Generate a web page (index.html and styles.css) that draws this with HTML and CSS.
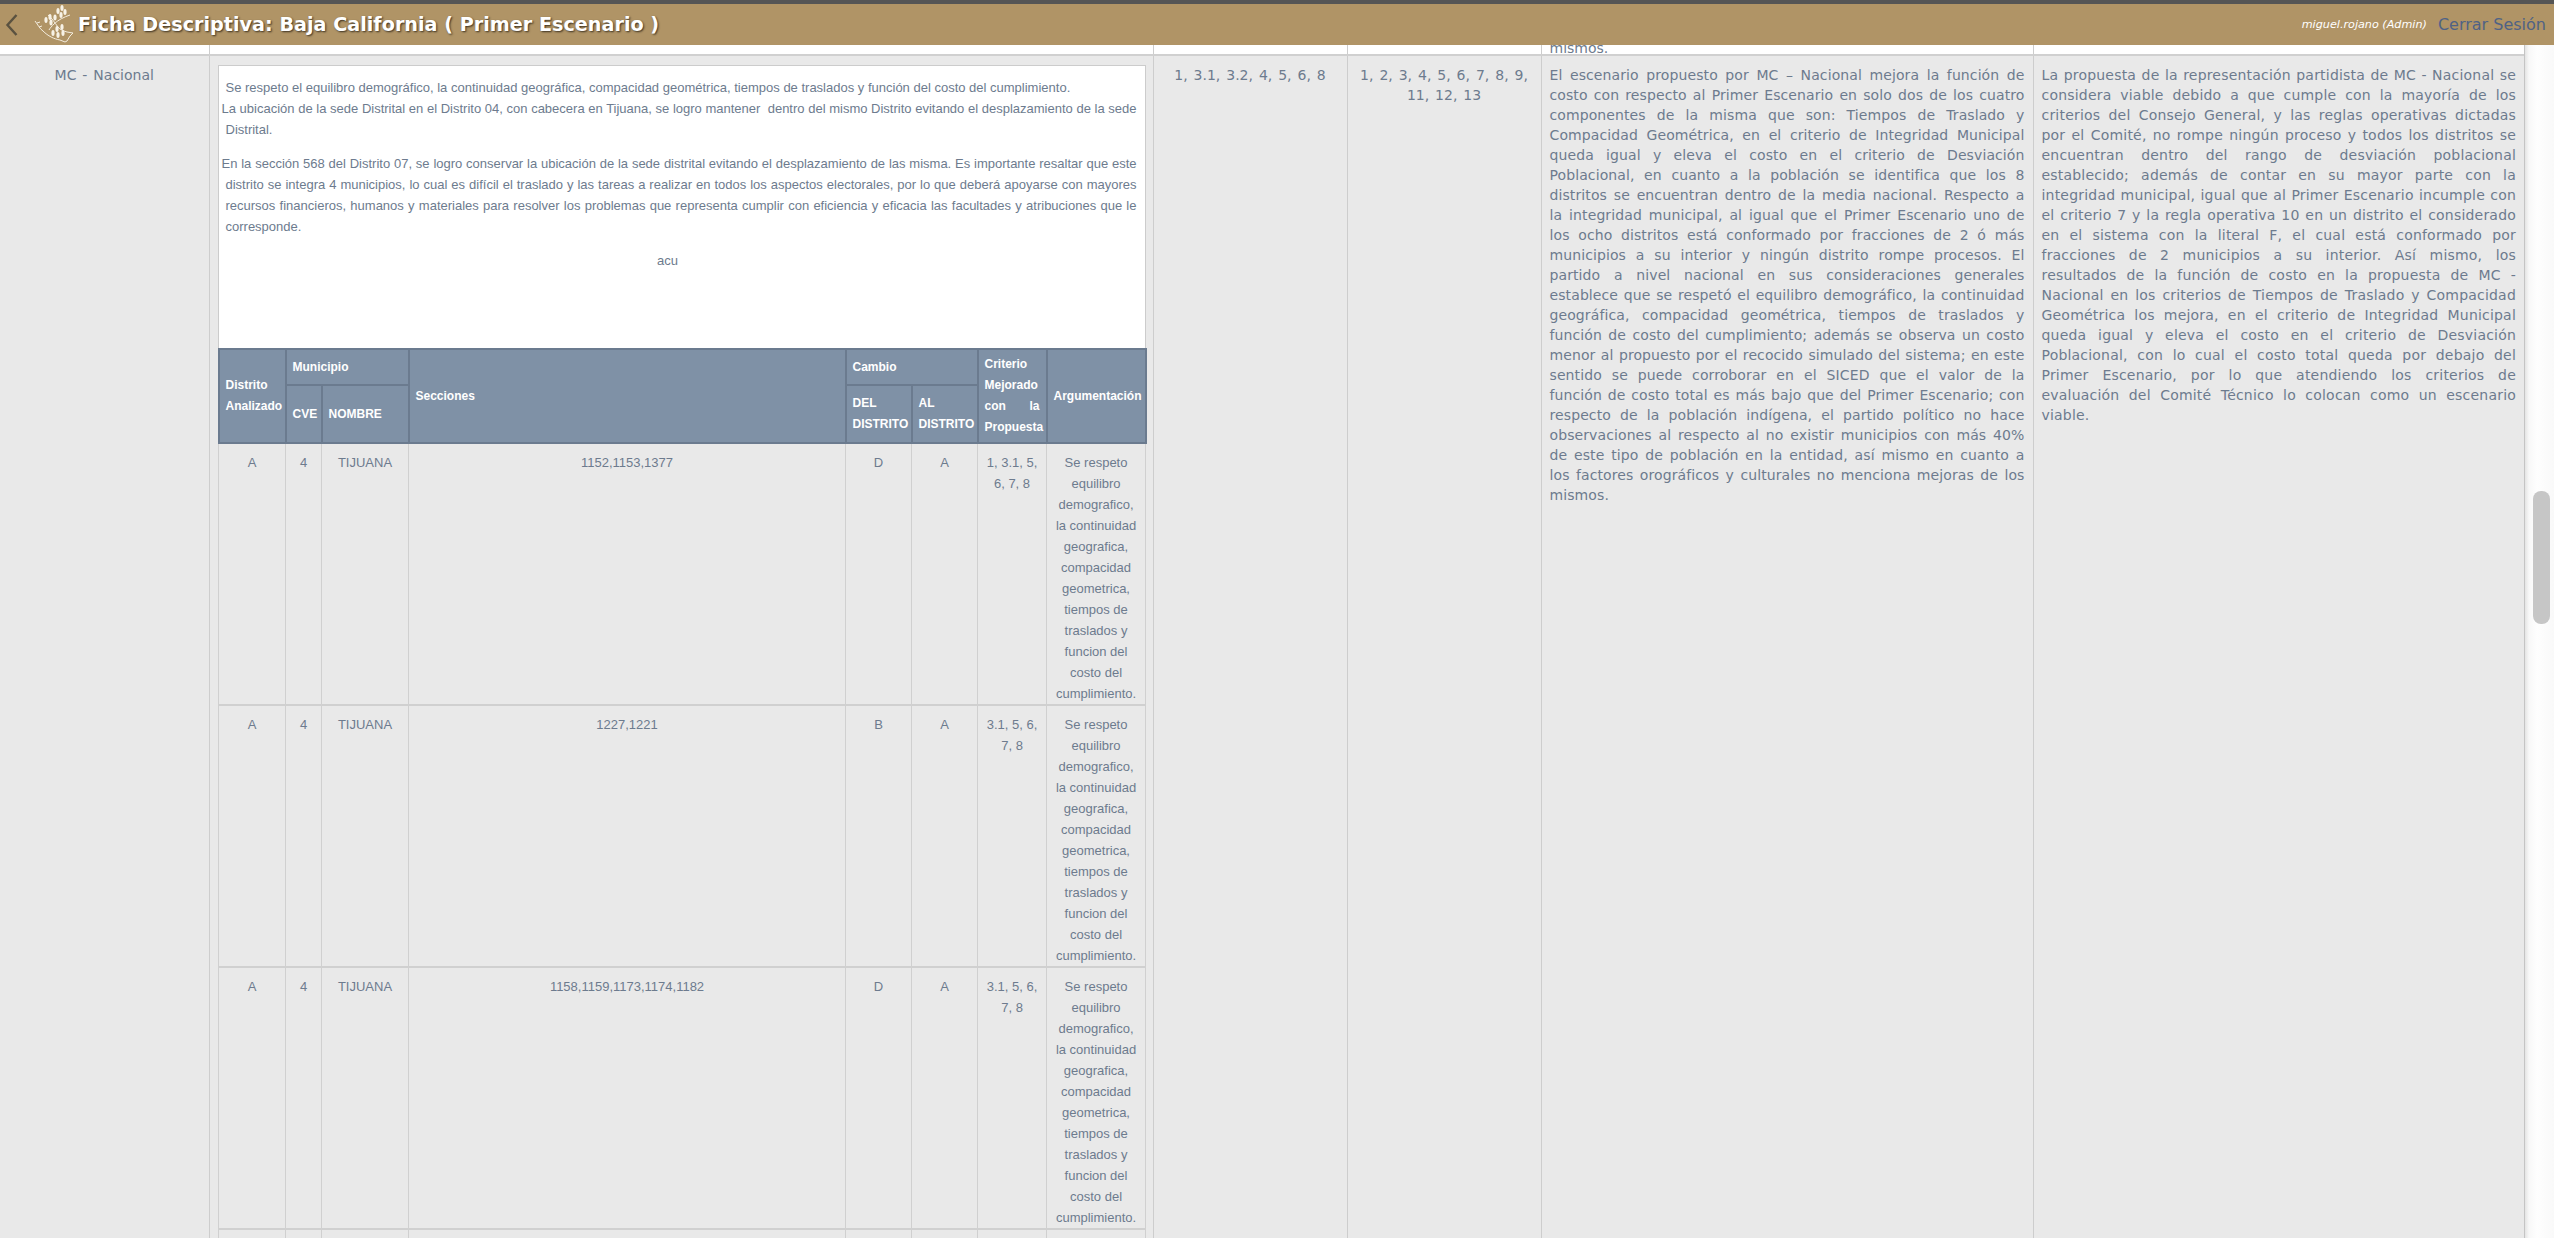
FILE: index.html
```html
<!DOCTYPE html>
<html lang="es">
<head>
<meta charset="utf-8">
<title>Ficha Descriptiva</title>
<link rel="stylesheet" href="styles.css">
</head>
<body>
<div class="app">
  <header class="topbar">
    <svg class="back" width="14" height="24" viewBox="0 0 14 24"><path d="M11.5 2 2.5 12l9 10" fill="none" stroke="#5a5240" stroke-width="2.4"/></svg>
    <svg class="logo" width="50" height="41" viewBox="0 2 50 41" fill="none" stroke="#f3ecdd" stroke-width="1">
      <path d="M5 19c3 4 5 8 8 10 5 5 11 8 17 9l5 2 2-1 3-5 3-3-6-1c-3-1-7-2-9-5-4-5-6-9-10-12"/>
      <path d="M7 21l3-1M9 25l3-1"/>
      <path d="M40 13c-6 2-12 5-16 9-2 2-4 4-5 6"/>
      <g fill="#f7f2e6" stroke="none">
        <ellipse cx="32" cy="6" rx="1.6" ry="3"/><ellipse cx="28" cy="9" rx="1.6" ry="3"/><ellipse cx="35" cy="10" rx="1.6" ry="3"/><ellipse cx="31" cy="13" rx="1.6" ry="3"/>
        <ellipse cx="20" cy="15" rx="1.6" ry="3"/><ellipse cx="25" cy="15.500" rx="1.600" ry="3"/><ellipse cx="16" cy="18" rx="1.6" ry="3"/><ellipse cx="21" cy="20.500" rx="1.600" ry="3"/>
        <ellipse cx="27" cy="27" rx="1.6" ry="3"/><ellipse cx="32" cy="25" rx="1.6" ry="3"/><ellipse cx="23" cy="31" rx="1.6" ry="3"/><ellipse cx="28" cy="33" rx="1.6" ry="3"/><ellipse cx="33" cy="31" rx="1.6" ry="3"/>
      </g>
    </svg>
    <h1 class="title">Ficha Descriptiva: Baja California ( Primer Escenario )</h1>
    <span class="user">miguel.rojano (Admin)</span>
    <a class="logout">Cerrar Sesión</a>
  </header>
  <div class="main">
    <div class="sheet">
      <table class="outer">
        <colgroup><col class="o1"><col class="o2"><col class="o3"><col class="o4"><col class="o5"><col class="o6"></colgroup>
        <tr class="prev">
          <td></td><td></td><td></td><td></td>
          <td><div class="clip"><p class="clip-text">mismos.</p></div></td>
          <td></td>
        </tr>
        <tr class="entry">
          <td class="center">MC - Nacional</td>
          <td class="box-cell">
            <div class="box">
              <div class="notes">
                <p class="note">Se respeto el equilibro demográfico, la continuidad geográfica, compacidad geométrica, tiempos de traslados y función del costo del cumplimiento.</p>
                <p class="note hang">La ubicación de la sede Distrital en el Distrito 04, con cabecera en Tijuana, se logro mantener&nbsp; dentro del mismo Distrito evitando el desplazamiento de la sede Distrital.</p>
                <p class="note hang gap">En la sección 568 del Distrito 07, se logro conservar la ubicación de la sede distrital evitando el desplazamiento de las misma. Es importante resaltar que este distrito se integra 4 municipios, lo cual es difícil el traslado y las tareas a realizar en todos los aspectos electorales, por lo que deberá apoyarse con mayores recursos financieros, humanos y materiales para resolver los problemas que representa cumplir con eficiencia y eficacia las facultades y atribuciones que le corresponde.</p>
                <p class="note acu">acu</p>
              </div>
              <table class="inner">
                <colgroup><col class="i1"><col class="i2"><col class="i3"><col class="i4"><col class="i5"><col class="i6"><col class="i7"><col class="i8"></colgroup>
                <thead>
                  <tr class="h1">
                    <th rowspan="2">Distrito Analizado</th>
                    <th colspan="2">Municipio</th>
                    <th rowspan="2">Secciones</th>
                    <th colspan="2">Cambio</th>
                    <th rowspan="2" class="just">Criterio Mejorado con la Propuesta</th>
                    <th rowspan="2">Argumentación</th>
                  </tr>
                  <tr class="h2">
                    <th>CVE</th><th>NOMBRE</th><th>DEL DISTRITO</th><th>AL DISTRITO</th>
                  </tr>
                </thead>
                <tbody>
                  <tr><td>A</td><td>4</td><td>TIJUANA</td><td>1152,1153,1377</td><td>D</td><td>A</td><td>1, 3.1, 5, 6, 7, 8</td><td>Se respeto equilibro demografico, la continuidad geografica, compacidad geometrica, tiempos de traslados y funcion del costo del cumplimiento.</td></tr>
                  <tr><td>A</td><td>4</td><td>TIJUANA</td><td>1227,1221</td><td>B</td><td>A</td><td>3.1, 5, 6, 7, 8</td><td>Se respeto equilibro demografico, la continuidad geografica, compacidad geometrica, tiempos de traslados y funcion del costo del cumplimiento.</td></tr>
                  <tr><td>A</td><td>4</td><td>TIJUANA</td><td>1158,1159,1173,1174,1182</td><td>D</td><td>A</td><td>3.1, 5, 6, 7, 8</td><td>Se respeto equilibro demografico, la continuidad geografica, compacidad geometrica, tiempos de traslados y funcion del costo del cumplimiento.</td></tr>
                  <tr class="tail"><td></td><td></td><td></td><td></td><td></td><td></td><td></td><td></td></tr>
                </tbody>
              </table>
            </div>
          </td>
          <td class="center">1, 3.1, 3.2, 4, 5, 6, 8</td>
          <td class="center">1, 2, 3, 4, 5, 6, 7, 8, 9, 11, 12, 13</td>
          <td class="prose">El escenario propuesto por MC – Nacional mejora la función de costo con respecto al Primer Escenario en solo dos de los cuatro componentes de la misma que son: Tiempos de Traslado y Compacidad Geométrica, en el criterio de Integridad Municipal queda igual y eleva el costo en el criterio de Desviación Poblacional, en cuanto a la población se identifica que los 8 distritos se encuentran dentro de la media nacional. Respecto a la integridad municipal, al igual que el Primer Escenario uno de los ocho distritos está conformado por fracciones de 2 ó más municipios a su interior y ningún distrito rompe procesos. El partido a nivel nacional en sus consideraciones generales establece que se respetó el equilibro demográfico, la continuidad geográfica, compacidad geométrica, tiempos de traslados y función de costo del cumplimiento; además se observa un costo menor al propuesto por el recocido simulado del sistema; en este sentido se puede corroborar en el SICED que el valor de la función de costo total es más bajo que del Primer Escenario; con respecto de la población indígena, el partido político no hace observaciones al respecto al no existir municipios con más 40% de este tipo de población en la entidad, así mismo en cuanto a los factores orográficos y culturales no menciona mejoras de los mismos.</td>
          <td class="prose tight">La propuesta de la representación partidista de MC - Nacional se considera viable debido a que cumple con la mayoría de los criterios del Consejo General, y las reglas operativas dictadas por el Comité, no rompe ningún proceso y todos los distritos se encuentran dentro del rango de desviación poblacional establecido; además de contar en su mayor parte con la integridad municipal, igual que al Primer Escenario incumple con el criterio 7 y la regla operativa 10 en un distrito el considerado en el sistema con la literal F, el cual está conformado por fracciones de 2 municipios a su interior. Así mismo, los resultados de la función de costo en la propuesta de MC - Nacional en los criterios de Tiempos de Traslado y Compacidad Geométrica los mejora, en el criterio de Integridad Municipal queda igual y eleva el costo en el criterio de Desviación Poblacional, con lo cual el costo total queda por debajo del Primer Escenario, por lo que atendiendo los criterios de evaluación del Comité Técnico lo colocan como un escenario viable.</td>
        </tr>
      </table>
    </div>
    <div class="track"><div class="thumb"></div></div>
  </div>
</div>
</body>
</html>
```
FILE: styles.css
```css
* { box-sizing: border-box; }
html, body { margin: 0; height: 100%; overflow: hidden; background: #fff; }
.app { height: 1238px; display: flex; flex-direction: column; font-family: "DejaVu Sans", Verdana, sans-serif; color: #6d7b8e; }

.topbar { flex: none; height: 45px; background: #b09466; border-top: 4px solid #555; display: flex; align-items: center; color: #fff; }
.back { margin-left: 5px; flex: none; }
.logo { margin-left: 11px; flex: none; }
.title { margin: 0 0 0 -2px; flex: 1; font-size: 19.2px; font-weight: bold; color: #fff; text-shadow: 1px 1px 2px #3a3020; white-space: nowrap; }
.user { font-size: 11.2px; font-style: italic; color: #fff; margin-right: 11px; }
.logout { font-size: 16px; color: #4f6285; margin-right: 8px; }

.main { flex: 1; min-height: 0; display: flex; }
.sheet { width: 2525px; flex: none; overflow: hidden; border-right: 1px solid #c4c4c4; }
.track { flex: 1; background: linear-gradient(90deg, #e4e4e4, #f8f8f8 4px, #fefefe 12px, #f9f9f9); padding: 446px 4px 0 8px; }
.thumb { height: 133px; border-radius: 8px; background: #c6c6c6; }

.outer { border-collapse: collapse; table-layout: fixed; width: 2524px; font-size: 14px; line-height: 20px; word-spacing: 0.5px; }
.o1 { width: 209px; } .o2 { width: 944px; } .o3 { width: 194px; } .o4 { width: 194px; } .o5 { width: 492px; } .o6 { width: 491px; }
.outer > tbody > tr > td { border-left: 1px solid #cdcdcd; vertical-align: top; }
.outer > tbody > tr > td:first-child { border-left: 0; }
.prev { height: 10px; background: #fff; }
.prev > td { padding: 0; border-bottom: 2px solid #d0d0d0; }
.clip { height: 8px; overflow: hidden; padding: 0 8px; }
.clip-text { margin: -7px 0 0; }
.entry { background: #e9e9e9; }
.entry > td { padding: 9px 8px; }
.entry > .box-cell { padding: 9px 7px 0 8px; }
.center { text-align: center; word-spacing: 1.5px; }
.prose { text-align: justify; letter-spacing: 0.1px; }
.tight { letter-spacing: 0.2px; }

.box { background: #fff; border: 1px solid #ccc; border-bottom: 0; font-family: "Liberation Sans", Arial, sans-serif; font-size: 13px; line-height: 21px; height: 1300px; word-spacing: 0; }
.notes { height: 282px; padding: 11px 8px 0 7px; }
.note { margin: 0; text-align: justify; }
.hang { text-indent: -4px; }
.gap { margin-top: 13px; }
.acu { margin-top: 13px; text-align: center; padding-right: 27px; }

.inner { border-collapse: collapse; table-layout: fixed; width: 927px; margin-left: -1px; background: #e9e9e9; }
.i1 { width: 67px; } .i2 { width: 36px; } .i3 { width: 87px; } .i4 { width: 437px; } .i5 { width: 66px; } .i6 { width: 66px; } .i7 { width: 69px; } .i8 { width: 99px; }
.inner th { background: #7f91a6; color: #fff; border: 2px solid #6b7b8f; font-size: 12px; font-weight: bold; padding: 0 6px; text-align: left; line-height: 21px; }
.inner th.just { text-align: justify; }
.h1 { height: 36px; }
.h2 { height: 58px; }
.inner td { border: 1px solid #d0d0d0; border-bottom: 2px solid #d0d0d0; border-top: 0; padding: 8px 5px 0; text-align: center; vertical-align: top; height: 260px; }
```
